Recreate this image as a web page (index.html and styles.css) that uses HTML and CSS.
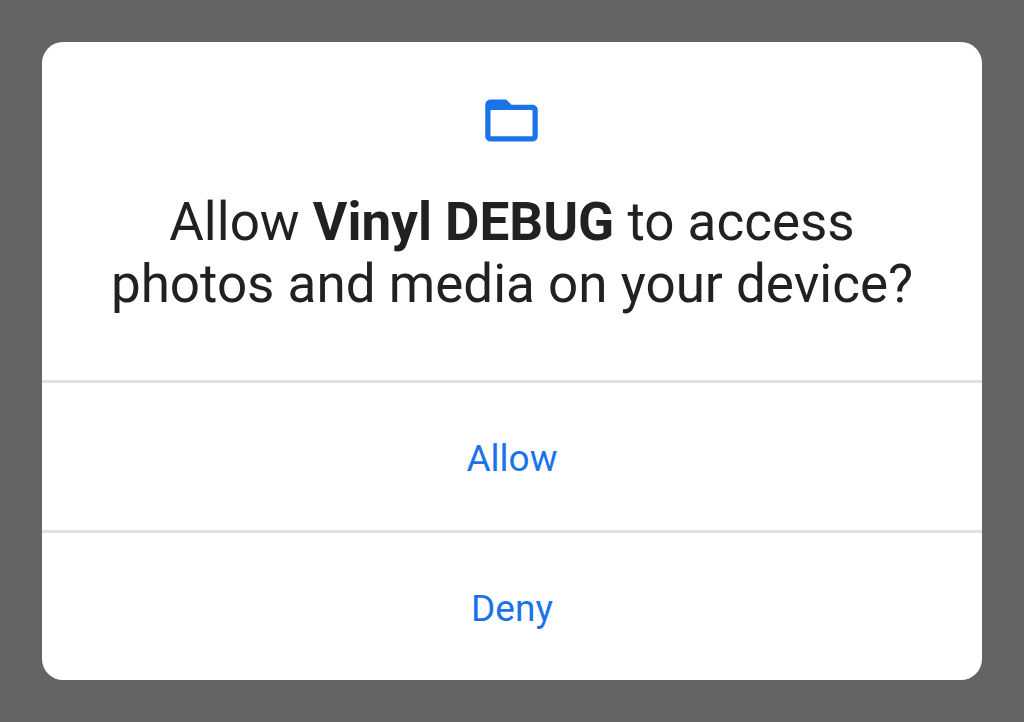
FILE: index.html
```html
<!DOCTYPE html>
<html lang="en">
<head>
<meta charset="utf-8">
<meta name="viewport" content="width=device-width, initial-scale=1">
<title>Permission request</title>
<link rel="stylesheet" href="styles.css">
</head>
<body>
<main class="dialog" role="dialog" aria-labelledby="dialog-title">
  <header class="dialog-header">
    <svg class="dialog-icon" viewBox="0 0 24 24" preserveAspectRatio="xMinYMid meet" aria-hidden="true">
      <path fill="currentColor" d="M20 6h-8l-2-2H4c-1.100 0-1.990.9-1.990 2L2 18c0 1.100.9 2 2 2h16c1.100 0 2-.9 2-2V8c0-1.100-.9-2-2-2zm0 12H4V8h16v10z"/>
    </svg>
    <h1 class="dialog-title" id="dialog-title">Allow <strong>Vinyl DEBUG</strong> to access photos and media on your device?</h1>
  </header>
  <button class="dialog-action" type="button">Allow</button>
  <button class="dialog-action" type="button">Deny</button>
</main>
</body>
</html>
```
FILE: styles.css
```css
* {
  box-sizing: border-box;
}

body {
  margin: 0;
  padding: 42px;
  background: #646464;
  color: #212121;
  font-family: Roboto, sans-serif;
}

.dialog {
  display: flex;
  flex-direction: column;
  overflow: hidden;
  border-radius: 21px;
  background: #fff;
}

.dialog-header {
  display: flex;
  flex-direction: column;
  align-items: center;
  gap: 39px;
  padding: 47px 63px 65px;
}

.dialog-icon {
  width: 64px;
  height: 63px;
  color: #1a73e8;
}

.dialog-title {
  margin: 0;
  font-size: 53px;
  font-weight: 400;
  line-height: 62px;
  text-align: center;
}

.dialog-title strong {
  font-weight: 700;
}

.dialog-action {
  padding: 54px 16px 49px;
  border: 0;
  border-top: 3px solid #e0e0e0;
  background: transparent;
  color: #1a73e8;
  font: 400 37px/44px Roboto, sans-serif;
  cursor: pointer;
}
```
